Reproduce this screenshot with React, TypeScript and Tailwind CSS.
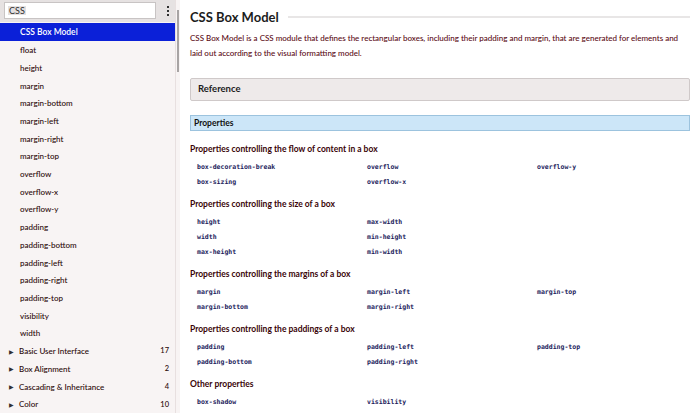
import React from "react";

const sidebarItems = [
  "float",
  "height",
  "margin",
  "margin-bottom",
  "margin-left",
  "margin-right",
  "margin-top",
  "overflow",
  "overflow-x",
  "overflow-y",
  "padding",
  "padding-bottom",
  "padding-left",
  "padding-right",
  "padding-top",
  "visibility",
  "width",
];

const categories = [
  { label: "Basic User Interface", count: 17 },
  { label: "Box Alignment", count: 2 },
  { label: "Cascading & Inheritance", count: 4 },
  { label: "Color", count: 10 },
];

type Group = { title: string; cols: string[][] };

const groups: Group[] = [
  {
    title: "Properties controlling the flow of content in a box",
    cols: [["box-decoration-break", "box-sizing"], ["overflow", "overflow-x"], ["overflow-y"]],
  },
  {
    title: "Properties controlling the size of a box",
    cols: [["height", "width", "max-height"], ["max-width", "min-height", "min-width"], []],
  },
  {
    title: "Properties controlling the margins of a box",
    cols: [["margin", "margin-bottom"], ["margin-left", "margin-right"], ["margin-top"]],
  },
  {
    title: "Properties controlling the paddings of a box",
    cols: [["padding", "padding-bottom"], ["padding-left", "padding-right"], ["padding-top"]],
  },
  {
    title: "Other properties",
    cols: [["box-shadow"], ["visibility"], []],
  },
];

const font = { fontFamily: 'Lato, "Open Sans", sans-serif' };
const mono = { fontFamily: '"DejaVu Sans Mono", "Liberation Mono", monospace' };

function Sidebar() {
  return (
    <div className="flex h-full w-[180px] shrink-0 bg-[#f8f4f4]">
      <div className="flex w-[176px] flex-col border-r border-[#e8e0e0]">
        <div className="flex h-[22px] items-center gap-[6px] bg-[#e6e2e2] pl-[4px] pr-[6px]">
          <div className="flex h-[17px] w-[152px] items-center border border-[#c8c4c4] bg-white px-[3px]">
            <span className="bg-[#e4e0e0] px-[1px] text-[9px] leading-none text-[#303030]">CSS</span>
          </div>
          <div className="flex flex-col gap-[2px] pl-[5px]">
            <span className="h-[2px] w-[2px] bg-[#303030]" />
            <span className="h-[2px] w-[2px] bg-[#303030]" />
            <span className="h-[2px] w-[2px] bg-[#303030]" />
          </div>
        </div>
        <div className="mt-[1px] flex h-[19px] items-center bg-[#0b20d8] pl-[20px] text-[8.5px] font-semibold text-white">
          CSS Box Model
        </div>
        {sidebarItems.map((item) => (
          <div key={item} className="flex h-[18px] items-center pl-[20px] text-[8px] font-medium text-[#2a0808]">
            {item}
          </div>
        ))}
        {categories.map((c) => (
          <div key={c.label} className="flex h-[18px] items-center pl-[9px] pr-[6px] text-[8px] font-medium text-[#2a0808]">
            <span className="mr-[5px] text-[6px] text-[#303030]">▶</span>
            <span className="flex-1">{c.label}</span>
            <span className="text-[7.5px]">{c.count}</span>
          </div>
        ))}
      </div>
      <div className="w-[4px] pt-[10px]">
        <div className="ml-[1px] h-[62px] w-[2px] bg-[#a8a4a4]" />
      </div>
    </div>
  );
}

export default function App() {
  return (
    <div className="flex h-[413px] w-[697px] overflow-hidden bg-white" style={font}>
      <Sidebar />
      <div className="flex-1 pl-[10px] pr-[7px]">
        <div className="flex items-center pt-[8px]">
          <h1 className="text-[13px] font-bold leading-[18px] text-[#1c1c1c]">CSS Box Model</h1>
          <div className="ml-[9px] h-[2px] flex-1 bg-[#e8e6e6]" />
        </div>
        <p className="mt-[5px] text-[8px] font-medium leading-[15px] text-[#5a0a14]">
          CSS Box Model is a CSS module that defines the rectangular boxes, including their padding and margin, that are
          generated for elements and laid out according to the visual formatting model.
        </p>
        <div className="mt-[17px] flex h-[23px] items-center rounded-[2px] border border-[#cfc9c9] bg-[#eeeaea] pl-[7px] text-[9.5px] font-bold text-[#1c1c1c]">
          Reference
        </div>
        <div className="mt-[14px] flex h-[16px] items-center border border-[#9cc3de] bg-[#cce6f8] pl-[3px] text-[8.5px] font-bold text-[#101010]">
          Properties
        </div>
        <div className="pt-[11px]">
          {groups.map((g) => (
            <div key={g.title} className="mb-[7.5px]">
              <h3 className="h-[14px] text-[8.5px] font-bold leading-[14px] text-[#3a0408]">{g.title}</h3>
              <div className="mt-[3.5px] grid grid-cols-[170px_170px_1fr] pl-[7px]">
                {g.cols.map((col, i) => (
                  <div key={i} className="flex flex-col">
                    {col.map((p) => (
                      <span key={p} className="h-[15px] text-[6.5px] font-bold leading-[15px] text-[#1c1c5c]" style={mono}>
                        {p}
                      </span>
                    ))}
                  </div>
                ))}
              </div>
            </div>
          ))}
        </div>
      </div>
    </div>
  );
}
